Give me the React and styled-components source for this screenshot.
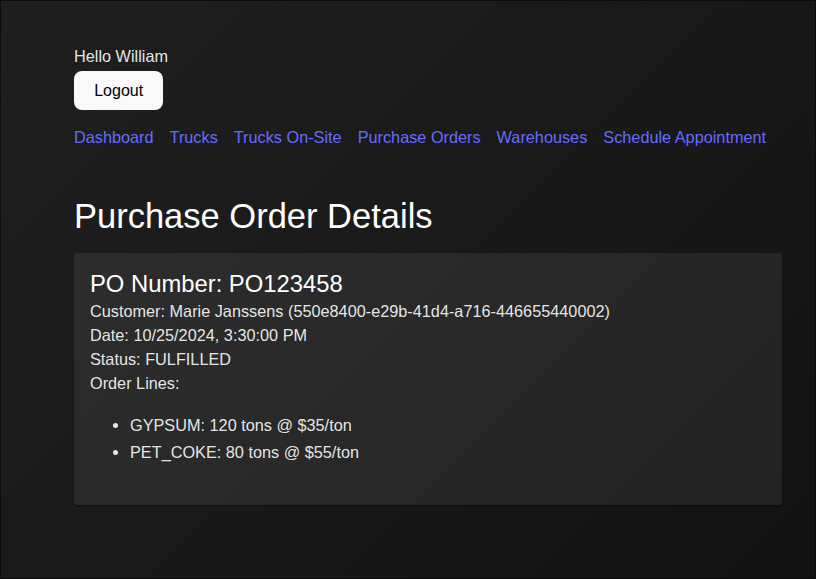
import React from "react";
import styled, { createGlobalStyle } from "styled-components";

const Global = createGlobalStyle`
  html, body { margin: 0; padding: 0; }
  body {
    font-family: "Liberation Sans", Arial, sans-serif;
    font-size: 16.27px;
    line-height: 1.5;
    color: rgba(255, 255, 255, 0.9);
    background: #181818;
  }
  * { box-sizing: border-box; }
`;

const Page = styled.div`
  min-height: 100vh;
  height: 579px;
  border: 1px solid #0b0b0b;
  background: linear-gradient(135deg, #1f1f1f 0%, #1a1a1a 45%, #121212 100%);
  padding: 43px 33px 0 73px;
`;

const Greeting = styled.div`
  line-height: 24px;
`;

const Button = styled.button`
  margin-top: 3px;
  font-family: inherit;
  font-size: 16px;
  line-height: normal;
  padding: 9.6px 19.2px;
  border: 1px solid transparent;
  border-radius: 8px;
  background: #f9f9f9;
  color: #000;
  cursor: pointer;
`;

const Nav = styled.nav`
  display: flex;
  gap: 16px;
  margin-top: 15px;
  line-height: 24px;
`;

const NavLink = styled.a`
  color: #646cff;
  text-decoration: none;
`;

const Title = styled.h1`
  font-size: 34.5px;
  font-weight: 400;
  line-height: 1.1;
  margin: 48.5px 0 17.5px;
  color: #fff;
`;

const Card = styled.section`
  background: rgba(255, 255, 255, 0.07);
  border-radius: 4px;
  padding: 17px 16px 25.5px;
  box-shadow: 0 1px 2px rgba(0, 0, 0, 0.4);
`;

const PoNumber = styled.h2`
  font-size: 23.8px;
  font-weight: 400;
  line-height: normal;
  margin: 0 0 0.8px;
  color: #fff;
`;

const Line = styled.div`
  line-height: 24px;
`;

const List = styled.ul`
  margin: 18px 0 16px;
  padding-left: 40px;
`;

const Item = styled.li`
  line-height: 24px;
  margin: 3px 0;
`;

export default function App() {
  const links = [
    "Dashboard",
    "Trucks",
    "Trucks On-Site",
    "Purchase Orders",
    "Warehouses",
    "Schedule Appointment",
  ];
  return (
    <>
      <Global />
      <Page>
        <Greeting>Hello William</Greeting>
        <Button>Logout</Button>
        <Nav>
          {links.map((l) => (
            <NavLink key={l} href="#">
              {l}
            </NavLink>
          ))}
        </Nav>
        <Title>Purchase Order Details</Title>
        <Card>
          <PoNumber>PO Number: PO123458</PoNumber>
          <Line>Customer: Marie Janssens (550e8400-e29b-41d4-a716-446655440002)</Line>
          <Line>Date: 10/25/2024, 3:30:00 PM</Line>
          <Line>Status: FULFILLED</Line>
          <Line>Order Lines:</Line>
          <List>
            <Item>GYPSUM: 120 tons @ $35/ton</Item>
            <Item>PET_COKE: 80 tons @ $55/ton</Item>
          </List>
        </Card>
      </Page>
    </>
  );
}
